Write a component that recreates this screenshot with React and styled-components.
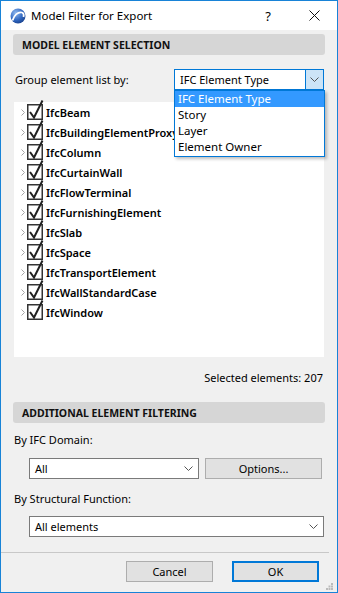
import React from 'react';
import styled, {createGlobalStyle} from 'styled-components';

const GlobalStyle = createGlobalStyle`
    html, body {
        margin: 0;
        padding: 0;
        background: #ffffff;
    }
    body {
        font-family: "Noto Sans", "Open Sans", "Liberation Sans", sans-serif;
        font-size: 11px;
        color: #000;
    }
`

const Window = styled.div`
    width: 338px;
    height: 593px;
    box-sizing: border-box;
    border: 1px solid #1883d7;
    background: #f0f0f0;
    display: flex;
    flex-direction: column;
    position: relative;
    overflow: hidden;
`

const TitleBar = styled.div`
    height: 30px;
    background: #fff;
    display: flex;
    align-items: center;
    padding-left: 9px;
`

const TitleText = styled.div`
    margin-left: 5px;
    font-size: 11.5px;
    flex: 1;
`

const TitleButton = styled.div`
    width: ${props => props.$width}px;
    display: flex;
    justify-content: center;
    align-items: center;
    font-size: 13px;
`

const Body = styled.div`
    flex: 1;
    display: flex;
    flex-direction: column;
    padding: 0 12px;
`

const SectionHeader = styled.div`
    margin-top: ${props => props.$top}px;
    height: 21px;
    border-radius: 3px;
    background: #d6d6d6;
    display: flex;
    align-items: center;
    padding-left: 9px;
    font-size: 10.5px;
    font-weight: 700;
    color: #111;
`

const FieldRow = styled.div`
    margin-top: ${props => props.$top}px;
    display: flex;
    align-items: center;
    justify-content: space-between;
    padding: 0 1px;
    position: relative;
`

const IndentRow = styled.div`
    margin-top: ${props => props.$top}px;
    display: flex;
    align-items: center;
    gap: 6px;
    padding-left: 16px;
    padding-right: ${props => props.$right}px;
`

const Label = styled.div`
    margin-top: ${props => props.$top || 0}px;
    padding-left: 1px;
    height: 16px;
    line-height: 16px;
`

const SelectWrap = styled.div`
    position: relative;
    width: ${props => props.$width}px;
    flex: ${props => props.$grow ? 1 : 'none'};
`

const Select = styled.div`
    height: 21px;
    box-sizing: border-box;
    border: 1px solid ${props => props.$focused ? '#0078d7' : '#7a7a7a'};
    background: #fff;
    display: flex;
    align-items: center;
    padding-left: 5px;
`

const SelectValue = styled.div`
    flex: 1;
`

const SelectArrow = styled.div`
    width: ${props => props.$focused ? 17 : 20}px;
    align-self: stretch;
    display: flex;
    align-items: center;
    justify-content: center;
    background: ${props => props.$focused ? '#cce4f7' : 'transparent'};
    border-left: ${props => props.$focused ? '1px solid #0078d7' : 'none'};
`

const DropList = styled.div`
    position: absolute;
    left: 0;
    top: 21px;
    width: 151px;
    box-sizing: border-box;
    border: 1px solid #0078d7;
    background: #fff;
    padding: 0 0 1px;
    box-shadow: 2px 2px 3px rgba(0, 0, 0, 0.25);
    z-index: 2;
`

const Option = styled.div`
    height: 16px;
    line-height: 16px;
    padding-left: 3px;
    font-size: 11.5px;
    background: ${props => props.$active ? '#3399ff' : 'transparent'};
    color: ${props => props.$active ? '#fff' : '#000'};
`

const TreePanel = styled.div`
    margin: 12px 1px 0;
    height: 255px;
    background: #fff;
`

const TreeRow = styled.div`
    height: 20px;
    display: flex;
    align-items: center;
    padding-left: 5px;
`

const Expander = styled.div`
    width: 8px;
    display: flex;
    justify-content: center;
`

const ItemName = styled.div`
    margin-left: 2px;
    font-weight: 600;
    font-size: 11px;
`

const Summary = styled.div`
    margin-top: 13px;
    height: 16px;
    line-height: 16px;
    text-align: right;
    padding-right: 2px;
`

const Button = styled.div`
    width: ${props => props.$width}px;
    height: 21px;
    box-sizing: border-box;
    border: ${props => props.$default ? '2px solid #0078d7' : '1px solid #adadad'};
    background: #e1e1e1;
    display: flex;
    align-items: center;
    justify-content: center;
`

const Footer = styled.div`
    margin: 15px 8px 0 0;
    border-top: 1px solid #c8c8c8;
    padding: 8px 10px 0 0;
    display: flex;
    justify-content: flex-end;
    gap: 19px;
`

const Grip = styled.svg`
    position: absolute;
    right: 4px;
    bottom: 2px;
`

const AppLogo = () => (
    <svg width="16" height="16" viewBox="0 0 16 16">
        <defs>
            <radialGradient id="lg" cx="0.35" cy="0.3" r="0.8">
                <stop offset="0" stopColor="#8fb8ee"/>
                <stop offset="0.6" stopColor="#2f66c0"/>
                <stop offset="1" stopColor="#173d86"/>
            </radialGradient>
        </defs>
        <circle cx="8" cy="8" r="7.5" fill="url(#lg)"/>
        <path d="M2.5 12.5 C4 7 8 3.5 12 4.5 C13.5 5 14 7 13.5 9" stroke="#fff" strokeWidth="1.8" fill="none"/>
    </svg>
)

const Chevron = () => (
    <svg width="9" height="5" viewBox="0 0 9 5">
        <path d="M0.5 0.5 L4.5 4.5 L8.5 0.5" stroke="#555" strokeWidth="1" fill="none"/>
    </svg>
)

const Expand = () => (
    <svg width="4" height="7" viewBox="0 0 4 7">
        <path d="M0.5 0.5 L3.5 3.5 L0.5 6.5" stroke="#a6a6a6" strokeWidth="1" fill="none"/>
    </svg>
)

const CheckBox = () => (
    <svg width="17" height="20" viewBox="0 0 17 20" style={{overflow: 'visible'}}>
        <rect x="0.75" y="2.75" width="14.5" height="14.5" fill="#fff" stroke="#333" strokeWidth="1.5"/>
        <path d="M3 10 L7 15.5 L15.5 -1.5" stroke="#222" strokeWidth="2" fill="none"/>
    </svg>
)

const CloseIcon = () => (
    <svg width="11" height="11" viewBox="0 0 11 11">
        <path d="M0.5 0.5 L10.5 10.5 M10.5 0.5 L0.5 10.5" stroke="#111" strokeWidth="1"/>
    </svg>
)

const items = [
    'IfcBeam',
    'IfcBuildingElementProxy',
    'IfcColumn',
    'IfcCurtainWall',
    'IfcFlowTerminal',
    'IfcFurnishingElement',
    'IfcSlab',
    'IfcSpace',
    'IfcTransportElement',
    'IfcWallStandardCase',
    'IfcWindow',
]

const groupOptions = ['IFC Element Type', 'Story', 'Layer', 'Element Owner']

export default function App() {
    return (<>
        <GlobalStyle/>
        <Window>
            <TitleBar>
                <AppLogo/>
                <TitleText>Model Filter for Export</TitleText>
                <TitleButton $width={46}>?</TitleButton>
                <TitleButton $width={46}><CloseIcon/></TitleButton>
            </TitleBar>
            <Body>
                <SectionHeader $top={4}>MODEL ELEMENT SELECTION</SectionHeader>

                <FieldRow $top={14}>
                    <Label>Group element list by:</Label>
                    <SelectWrap $width={150}>
                        <Select $focused>
                            <SelectValue>IFC Element Type</SelectValue>
                            <SelectArrow $focused><Chevron/></SelectArrow>
                        </Select>
                        <DropList>
                            {groupOptions.map((o, i) => <Option key={o} $active={i === 0}>{o}</Option>)}
                        </DropList>
                    </SelectWrap>
                </FieldRow>

                <TreePanel>
                    {items.map(name => (
                        <TreeRow key={name}>
                            <Expander><Expand/></Expander>
                            <CheckBox/>
                            <ItemName>{name}</ItemName>
                        </TreeRow>
                    ))}
                </TreePanel>

                <Summary>Selected elements: 207</Summary>

                <SectionHeader $top={16}>ADDITIONAL ELEMENT FILTERING</SectionHeader>

                <Label $top={9}>By IFC Domain:</Label>
                <IndentRow $top={10} $right={3}>
                    <SelectWrap $width={170}>
                        <Select>
                            <SelectValue>All</SelectValue>
                            <SelectArrow><Chevron/></SelectArrow>
                        </Select>
                    </SelectWrap>
                    <Button $width={117}>Options...</Button>
                </IndentRow>

                <Label $top={12}>By Structural Function:</Label>
                <IndentRow $top={9} $right={1}>
                    <SelectWrap $grow>
                        <Select>
                            <SelectValue>All elements</SelectValue>
                            <SelectArrow><Chevron/></SelectArrow>
                        </Select>
                    </SelectWrap>
                </IndentRow>
            </Body>
            <Footer>
                <Button $width={87}>Cancel</Button>
                <Button $width={87} $default>OK</Button>
            </Footer>
            <div style={{height: 10}}/>
            <Grip width="7" height="7" viewBox="0 0 7 7">
                <rect x="5" y="0" width="2" height="2" fill="#bbb"/>
                <rect x="2.5" y="2.5" width="2" height="2" fill="#bbb"/>
                <rect x="5" y="2.5" width="2" height="2" fill="#bbb"/>
                <rect x="0" y="5" width="2" height="2" fill="#bbb"/>
                <rect x="2.5" y="5" width="2" height="2" fill="#bbb"/>
                <rect x="5" y="5" width="2" height="2" fill="#bbb"/>
            </Grip>
        </Window>
    </>);
}
